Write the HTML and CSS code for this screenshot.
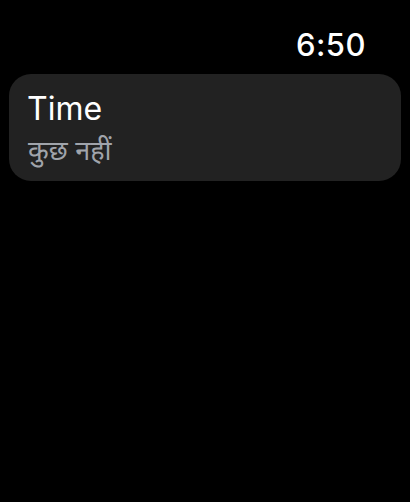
FILE: index.html
```html
<!DOCTYPE html>
<html lang="hi">
<head>
<meta charset="utf-8">
<link rel="stylesheet" href="styles.css">
</head>
<body>
<div class="screen">
  <div class="status"><span class="clock">6:50</span></div>
  <div class="card">
    <div class="title">Time</div>
    <div class="subtitle">कुछ नहीं</div>
  </div>
</div>
</body>
</html>
```
FILE: styles.css
```css
html, body {
  margin: 0;
  padding: 0;
  background: #000;
}
.screen {
  width: 410px;
  height: 502px;
  background: #000;
  display: flex;
  flex-direction: column;
  padding: 0 9px;
  box-sizing: border-box;
  font-family: Inter, "Noto Sans", "Noto Sans Devanagari", sans-serif;
}
.status {
  display: flex;
  justify-content: flex-end;
  height: 74px;
  padding-right: 35px;
  box-sizing: border-box;
}
.clock {
  color: #fff;
  font-size: 31px;
  font-weight: 500;
  line-height: 1;
  padding-top: 29px;
  letter-spacing: 0.5px;
}
.card {
  background: #222222;
  border-radius: 22px;
  height: 107px;
  padding: 15px 19px 0 19px;
  box-sizing: border-box;
}
.title {
  color: #fff;
  font-size: 32px;
  line-height: 40px;
  margin-left: -1px;
}
.subtitle {
  color: #a0a4ab;
  font-size: 27px;
  line-height: 34px;
  margin-top: 5px;
}
```
